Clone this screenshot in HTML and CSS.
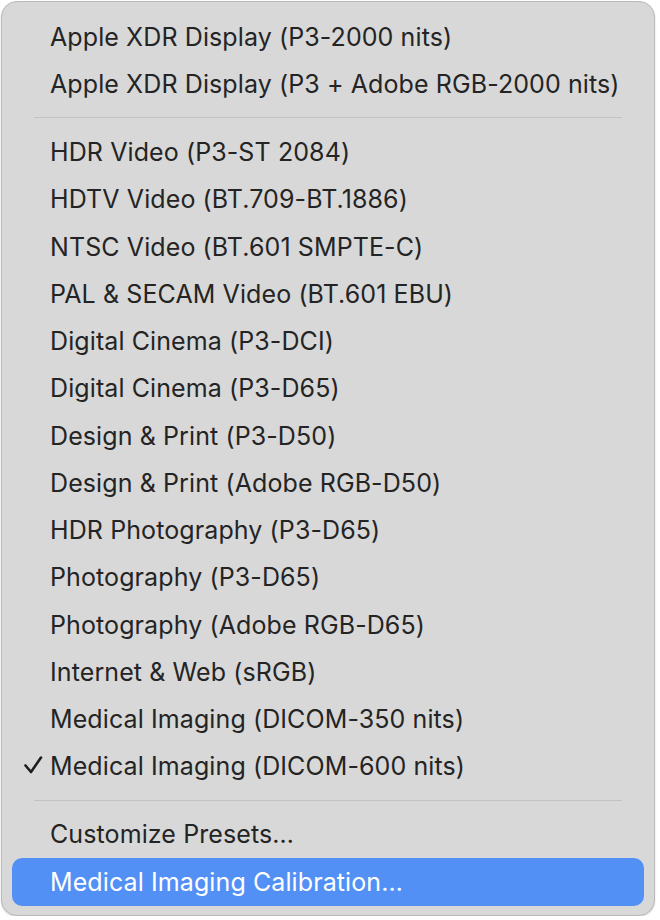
FILE: index.html
```html
<!DOCTYPE html>
<html>
<head>
<meta charset="utf-8">
<link rel="stylesheet" href="styles.css">
</head>
<body>
<div class="menu">
  <div class="item"><span class="check"></span><span class="label">Apple XDR Display (P3-2000 nits)</span></div>
  <div class="item"><span class="check"></span><span class="label">Apple XDR Display (P3 + Adobe RGB-2000 nits)</span></div>
  <div class="sep sep-first"></div>
  <div class="item"><span class="check"></span><span class="label">HDR Video (P3-ST 2084)</span></div>
  <div class="item"><span class="check"></span><span class="label">HDTV Video (BT.709-BT.1886)</span></div>
  <div class="item"><span class="check"></span><span class="label">NTSC Video (BT.601 SMPTE-C)</span></div>
  <div class="item"><span class="check"></span><span class="label">PAL &amp; SECAM Video (BT.601 EBU)</span></div>
  <div class="item"><span class="check"></span><span class="label">Digital Cinema (P3-DCI)</span></div>
  <div class="item"><span class="check"></span><span class="label">Digital Cinema (P3-D65)</span></div>
  <div class="item"><span class="check"></span><span class="label">Design &amp; Print (P3-D50)</span></div>
  <div class="item"><span class="check"></span><span class="label">Design &amp; Print (Adobe RGB-D50)</span></div>
  <div class="item"><span class="check"></span><span class="label">HDR Photography (P3-D65)</span></div>
  <div class="item"><span class="check"></span><span class="label">Photography (P3-D65)</span></div>
  <div class="item"><span class="check"></span><span class="label">Photography (Adobe RGB-D65)</span></div>
  <div class="item"><span class="check"></span><span class="label">Internet &amp; Web (sRGB)</span></div>
  <div class="item"><span class="check"></span><span class="label">Medical Imaging (DICOM-350 nits)</span></div>
  <div class="item"><span class="check"><svg width="20" height="20" viewBox="0 0 20 20"><path d="M2.5 10.5 L8 17 L18 2.5" fill="none" stroke="#1f1f1f" stroke-width="2.6" stroke-linecap="round" stroke-linejoin="round"/></svg></span><span class="label">Medical Imaging (DICOM-600 nits)</span></div>
  <div class="sep sep-second"></div>
  <div class="item"><span class="check"></span><span class="label">Customize Presets…</span></div>
  <div class="item selected"><span class="check"></span><span class="label">Medical Imaging Calibration…</span></div>
</div>
</body>
</html>
```
FILE: styles.css
```css
html, body {
  margin: 0;
  padding: 0;
  background: #ffffff;
}
body {
  padding: 1px 0 0 1px;
  font-family: Inter, "Liberation Sans", sans-serif;
}
.menu {
  width: 654px;
  height: 915px;
  box-sizing: border-box;
  background: #d8d8d8;
  border: 1px solid #b9b9b9;
  border-radius: 16px;
  box-shadow: 0 1px 2px rgba(0,0,0,0.15);
  padding: 11px 10px 9px 10px;
  display: flex;
  flex-direction: column;
}
.item {
  height: 47.25px;
  flex: none;
  display: flex;
  align-items: center;
  border-radius: 10px;
  color: #242424;
  font-size: 25px;
  letter-spacing: 0.1px;
}
.check {
  width: 38px;
  flex: none;
  display: flex;
  justify-content: center;
  padding-left: 3px;
  box-sizing: border-box;
  position: relative;
  top: -1px;
}
.label {
  white-space: nowrap;
}
.sep {
  flex: none;
  height: 1px;
  background: #c2c2c2;
  margin-left: 22px;
  margin-right: 22px;
}
.sep-first {
  margin-top: 9px;
  margin-bottom: 11px;
}
.sep-second {
  margin-top: 9.5px;
  margin-bottom: 10px;
}
.selected {
  background: #5390f5;
  color: #ffffff;
  height: 48px;
  margin-top: 0.5px;
}
```
